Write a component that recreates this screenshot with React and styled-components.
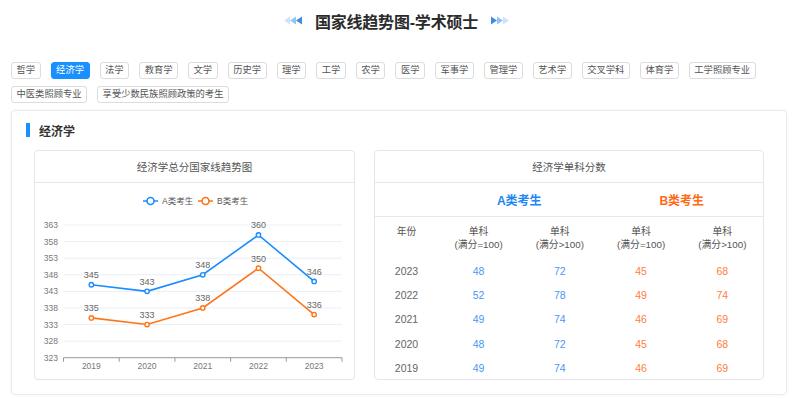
import React from "react";
import styled, { createGlobalStyle } from "styled-components";

const GlobalStyle = createGlobalStyle`
  html, body { margin: 0; padding: 0; background: #fff; }
  body { font-family: "Liberation Sans", "Noto Sans CJK SC", sans-serif; color: #333; }
  * { box-sizing: border-box; }
`;

const Page = styled.div`
  width: 793px;
  height: 398px;
  overflow: hidden;
`;

const TitleBar = styled.div`
  height: 40px;
  display: flex;
  align-items: center;
  justify-content: center;
  gap: 12px;
  padding-top: 1px;
`;

const TitleText = styled.h1`
  margin: 0;
  font-size: 16px;
  font-weight: 700;
  color: #2b2b2b;
  letter-spacing: -0.2px;
`;

const TagList = styled.div`
  margin-top: 22px;
  padding: 0 11px;
  display: flex;
  flex-wrap: wrap;
  gap: 7px 10px;
  width: 793px;
`;

const Tag = styled.span`
  display: inline-flex;
  align-items: center;
  height: 17px;
  padding: 0 4.5px;
  font-size: 9.3px;
  line-height: 1;
  border-radius: 3px;
  border: 1px solid ${(p) => (p.$active ? "#1890ff" : "#dcdcdc")};
  background: ${(p) => (p.$active ? "#1890ff" : "#fff")};
  color: ${(p) => (p.$active ? "#fff" : "#555")};
`;

const Panel = styled.section`
  margin: 7px 6px 0 11px;
  width: 776px;
  border: 1px solid #ebebeb;
  border-radius: 4px;
  box-shadow: 0 0 3px rgba(0, 0, 0, 0.06);
  padding: 12px 22px 14px 22px;
`;

const SectionHead = styled.div`
  display: flex;
  align-items: center;
  gap: 9px;
  height: 14px;
  margin-left: -8px;
`;

const SectionBar = styled.span`
  width: 4px;
  height: 14px;
  background: #1890ff;
`;

const SectionTitle = styled.span`
  font-size: 12px;
  font-weight: 700;
  color: #333;
`;

const CardGrid = styled.div`
  margin-top: 12.5px;
  display: grid;
  grid-template-columns: 321px 1fr;
  gap: 19px;
`;

const Card = styled.div`
  border: 1px solid #e6e6e6;
  border-radius: 4px;
  height: 230px;
  overflow: hidden;
`;

const CardHead = styled.div`
  height: 32px;
  border-bottom: 1px solid #e8e8e8;
  display: flex;
  align-items: center;
  justify-content: center;
  font-size: 10.5px;
  color: #555;
`;

const ChartBody = styled.div`
  height: 196px;
  display: block;
`;

const TableRow = styled.div`
  display: grid;
  grid-template-columns: 63px repeat(4, 1fr);
  align-items: ${(p) => (p.$top ? "start" : "center")};
  height: ${(p) => p.$h}px;
  padding-top: ${(p) => p.$pt || 0}px;
  border-bottom: ${(p) => (p.$line ? "1px solid #e8e8e8" : "none")};
`;

const GroupLabel = styled.div`
  grid-column: ${(p) => p.$col};
  text-align: center;
  font-size: 12px;
  font-weight: 700;
  color: ${(p) => p.$color};
`;

const HeadCell = styled.div`
  text-align: center;
  font-size: 9.8px;
  line-height: 13px;
  color: #555;
`;

const Cell = styled.div`
  text-align: center;
  font-size: 10.5px;
  color: ${(p) => (p.$tone === "a" ? "#4a97f5" : p.$tone === "b" ? "#ff7d3b" : "#666")};
`;

const Arrow = ({ dir }) => {
  const cols = ["#cfe2fa", "#93c2f5", "#3b8ce8"];
  const order = dir === "left" ? cols : [...cols].reverse();
  return (
    <svg width="20" height="9" viewBox="0 0 20 9">
      {order.map((c, i) => {
        const x = i * 6;
        const pts =
          dir === "left"
            ? `${x + 7},0.5 ${x + 1},4.5 ${x + 7},8.5`
            : `${x + 1},0.5 ${x + 7},4.5 ${x + 1},8.5`;
        return <polygon key={i} points={pts} fill={c} />;
      })}
    </svg>
  );
};

const years = ["2019", "2020", "2021", "2022", "2023"];
const aVals = [345, 343, 348, 360, 346];
const bVals = [335, 333, 338, 350, 336];
const ticks = [363, 358, 353, 348, 343, 338, 333, 328, 323];

const Chart = () => {
  const x0 = 28.5;
  const x1 = 307;
  const band = (x1 - x0) / 5;
  const cx = (i) => x0 + band * (i + 0.5);
  const yS = (v) => 174.7 - (v - 323) * 3.317;
  const blue = "#1a8cff";
  const orange = "#ff7416";
  const line = (vals) => vals.map((v, i) => `${cx(i)},${yS(v)}`).join(" ");
  return (
    <svg width="319" height="196" viewBox="0 0 319 196">
      <g>
        <line x1="108" y1="18" x2="123" y2="18" stroke={blue} strokeWidth="1.6" />
        <circle cx="115.5" cy="18" r="3.5" fill="#fff" stroke={blue} strokeWidth="1.6" />
        <text x="127" y="21" fontSize="8.5" fill="#555">A类考生</text>
        <line x1="163" y1="18" x2="178" y2="18" stroke={orange} strokeWidth="1.6" />
        <circle cx="170.5" cy="18" r="3.5" fill="#fff" stroke={orange} strokeWidth="1.6" />
        <text x="182" y="21" fontSize="8.5" fill="#555">B类考生</text>
      </g>
      {ticks.map((t) => (
        <g key={t}>
          {t !== 323 && (
            <line x1={x0} x2={x1} y1={yS(t)} y2={yS(t)} stroke="#e9eff7" strokeWidth="1" />
          )}
          <text x="23" y={yS(t) + 3} fontSize="8.5" fill="#777" textAnchor="end">
            {t}
          </text>
        </g>
      ))}
      <line x1={x0} x2={x1} y1={yS(323)} y2={yS(323)} stroke="#999" strokeWidth="1" />
      {[0, 1, 2, 3, 4, 5].map((i) => (
        <line key={i} x1={x0 + band * i} x2={x0 + band * i} y1={yS(323)} y2={yS(323) + 4} stroke="#999" />
      ))}
      {years.map((y, i) => (
        <text key={y} x={cx(i)} y={186} fontSize="8.5" fill="#777" textAnchor="middle">
          {y}
        </text>
      ))}
      <polyline points={line(aVals)} fill="none" stroke={blue} strokeWidth="1.6" />
      <polyline points={line(bVals)} fill="none" stroke={orange} strokeWidth="1.6" />
      {aVals.map((v, i) => (
        <g key={"a" + i}>
          <circle cx={cx(i)} cy={yS(v)} r="2.2" fill="#fff" stroke={blue} strokeWidth="1.4" />
          <text x={cx(i)} y={yS(v) - 6.5} fontSize="9" fill="#666" textAnchor="middle">{v}</text>
        </g>
      ))}
      {bVals.map((v, i) => (
        <g key={"b" + i}>
          <circle cx={cx(i)} cy={yS(v)} r="2.2" fill="#fff" stroke={orange} strokeWidth="1.4" />
          <text x={cx(i)} y={yS(v) - 6.5} fontSize="9" fill="#666" textAnchor="middle">{v}</text>
        </g>
      ))}
    </svg>
  );
};

const tags = [
  "哲学", "经济学", "法学", "教育学", "文学", "历史学", "理学", "工学", "农学", "医学",
  "军事学", "管理学", "艺术学", "交叉学科", "体育学", "工学照顾专业", "中医类照顾专业",
  "享受少数民族照顾政策的考生",
];

const rows = [
  ["2023", 48, 72, 45, 68],
  ["2022", 52, 78, 49, 74],
  ["2021", 49, 74, 46, 69],
  ["2020", 48, 72, 45, 68],
  ["2019", 49, 74, 46, 69],
];

export default function App() {
  return (
    <Page>
      <GlobalStyle />
      <TitleBar>
        <Arrow dir="left" />
        <TitleText>国家线趋势图-学术硕士</TitleText>
        <Arrow dir="right" />
      </TitleBar>
      <TagList>
        {tags.map((t) => (
          <Tag key={t} $active={t === "经济学"}>{t}</Tag>
        ))}
      </TagList>
      <Panel>
        <SectionHead>
          <SectionBar />
          <SectionTitle>经济学</SectionTitle>
        </SectionHead>
        <CardGrid>
          <Card>
            <CardHead>经济学总分国家线趋势图</CardHead>
            <ChartBody>
              <Chart />
            </ChartBody>
          </Card>
          <Card>
            <CardHead>经济学单科分数</CardHead>
            <TableRow $h={34} $line>
              <GroupLabel $col="2 / 4" $color="#1c87f5">A类考生</GroupLabel>
              <GroupLabel $col="4 / 6" $color="#ff6a14">B类考生</GroupLabel>
            </TableRow>
            <TableRow $h={42} $top $pt={8}>
              <HeadCell>年份</HeadCell>
              <HeadCell>单科<br />(满分=100)</HeadCell>
              <HeadCell>单科<br />(满分&gt;100)</HeadCell>
              <HeadCell>单科<br />(满分=100)</HeadCell>
              <HeadCell>单科<br />(满分&gt;100)</HeadCell>
            </TableRow>
            {rows.map((r) => (
              <TableRow key={r[0]} $h={24.3}>
                <Cell>{r[0]}</Cell>
                <Cell $tone="a">{r[1]}</Cell>
                <Cell $tone="a">{r[2]}</Cell>
                <Cell $tone="b">{r[3]}</Cell>
                <Cell $tone="b">{r[4]}</Cell>
              </TableRow>
            ))}
          </Card>
        </CardGrid>
      </Panel>
    </Page>
  );
}
